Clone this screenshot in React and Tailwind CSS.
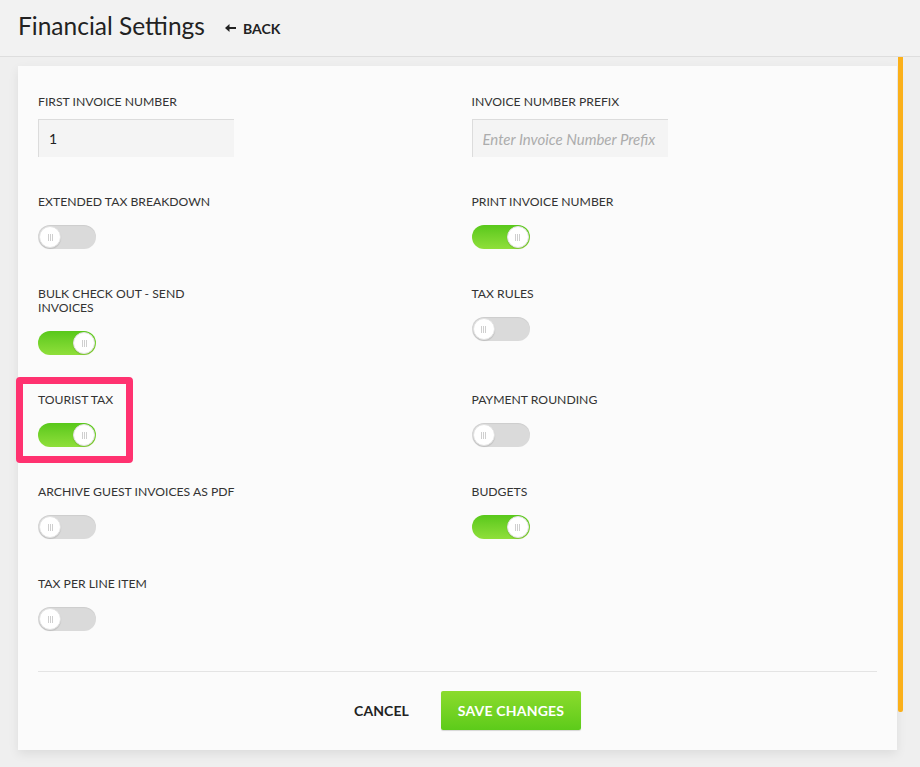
import React, { useState } from "react";

const Toggle = ({ on, onChange }) => (
  <button
    type="button"
    onClick={onChange}
    className={
      "relative block w-[58px] h-[24px] rounded-full " +
      (on
        ? "bg-gradient-to-b from-[#58c81a] to-[#8fdf3a]"
        : "bg-[#dadada] shadow-[inset_0_1px_1px_rgba(0,0,0,0.06)]")
    }
  >
    <span
      className={
        "absolute top-[1px] w-[22px] h-[22px] rounded-full bg-white border border-[#e2e2e2] shadow-[0_1px_1px_rgba(0,0,0,0.12)] flex items-center justify-center " +
        (on ? "left-[35px]" : "left-[1px]")
      }
    >
      <span className="flex gap-[1px]">
        <span className="w-[1px] h-[7px] bg-[#cfcfcf]" />
        <span className="w-[1px] h-[7px] bg-[#cfcfcf]" />
        <span className="w-[1px] h-[7px] bg-[#cfcfcf]" />
      </span>
    </span>
  </button>
);

const ToggleField = ({ label, on, onChange, highlight }) => (
  <div className="relative pb-[38px]">
    {highlight && (
      <div className="absolute left-[-22px] top-[-16px] w-[117px] h-[86px] border-[7px] border-[#ff3270] rounded-[4px] pointer-events-none" />
    )}
    <div className="text-[12.2px] leading-[14px] text-[#333] uppercase mb-[16px]">
      {label}
    </div>
    <Toggle on={on} onChange={onChange} />
  </div>
);

const App = () => {
  const [firstNumber, setFirstNumber] = useState("1");
  const [prefix, setPrefix] = useState("");
  const [settings, setSettings] = useState({
    extendedTax: false,
    printInvoice: true,
    bulkCheckout: true,
    taxRules: false,
    touristTax: true,
    paymentRounding: false,
    archivePdf: false,
    budgets: true,
    taxPerLine: false,
  });

  const flip = (key) => setSettings((s) => ({ ...s, [key]: !s[key] }));

  return (
    <div
      className="min-h-[767px] bg-[#efefef] text-[#333]"
      style={{ fontFamily: "Lato, 'Noto Sans', sans-serif" }}
    >
      {/* Header */}
      <div className="h-[57px] bg-[#f2f2f2] border-b border-[#dedede] flex items-center px-[18px] pb-[3px]">
        <h1 className="text-[24.5px] text-[#222] font-normal">
          Financial Settings
        </h1>
        <button className="ml-[20px] flex items-center gap-[7px] text-[14px] font-bold text-[#222] mt-[3px]">
          <svg width="11" height="8" viewBox="0 0 11 8">
            <path d="M0 4 L4.5 0 V3 H11 V5 H4.5 V8 Z" fill="#222" />
          </svg>
          BACK
        </button>
      </div>

      {/* Content */}
      <div className="relative pl-[18px] pr-[23px] pt-[9px]">
        <div className="absolute right-[17px] top-0 w-[5px] h-[655px] bg-[#fbb01a] rounded-b-[2px]" />
        <div className="bg-[#fbfbfb] shadow-[0_4px_10px_rgba(0,0,0,0.08)] px-[20px] pt-[29px] pb-[20px]">
          <div className="grid grid-cols-2 gap-x-[28px] mb-[2px]">
            <div className="pb-[38px]">
              <div className="text-[12.2px] leading-[14px] text-[#333] mb-[10px]">
                FIRST INVOICE NUMBER
              </div>
              <input
                value={firstNumber}
                onChange={(e) => setFirstNumber(e.target.value)}
                className="w-[196px] h-[38px] bg-[#f4f4f4] border-t border-l border-[#dcdcdc] px-[10px] text-[14px] text-[#222] outline-none"
              />
            </div>
            <div className="pb-[38px]">
              <div className="text-[12.2px] leading-[14px] text-[#333] mb-[10px]">
                INVOICE NUMBER PREFIX
              </div>
              <input
                value={prefix}
                onChange={(e) => setPrefix(e.target.value)}
                placeholder="Enter Invoice Number Prefix"
                className="w-[196px] h-[38px] bg-[#f4f4f4] border-t border-l border-[#dcdcdc] px-[10px] text-[15px] text-[#222] italic placeholder:text-[#acacac] outline-none"
              />
            </div>

            <ToggleField
              label="Extended Tax Breakdown"
              on={settings.extendedTax}
              onChange={() => flip("extendedTax")}
            />
            <ToggleField
              label="Print Invoice Number"
              on={settings.printInvoice}
              onChange={() => flip("printInvoice")}
            />

            <ToggleField
              label={
                <>
                  Bulk check out - send
                  <br />
                  invoices
                </>
              }
              on={settings.bulkCheckout}
              onChange={() => flip("bulkCheckout")}
            />
            <ToggleField
              label="Tax Rules"
              on={settings.taxRules}
              onChange={() => flip("taxRules")}
            />

            <ToggleField
              label="Tourist Tax"
              on={settings.touristTax}
              onChange={() => flip("touristTax")}
              highlight
            />
            <ToggleField
              label="Payment Rounding"
              on={settings.paymentRounding}
              onChange={() => flip("paymentRounding")}
            />

            <ToggleField
              label="Archive Guest Invoices as PDF"
              on={settings.archivePdf}
              onChange={() => flip("archivePdf")}
            />
            <ToggleField
              label="Budgets"
              on={settings.budgets}
              onChange={() => flip("budgets")}
            />

            <ToggleField
              label="Tax Per Line Item"
              on={settings.taxPerLine}
              onChange={() => flip("taxPerLine")}
            />
            <div />
          </div>

          <div className="border-t border-[#e4e4e4] pt-[19px] pl-[20px] flex justify-center items-center gap-[32px]">
            <button className="text-[14px] font-bold text-[#222] tracking-[0.1px]">
              CANCEL
            </button>
            <button className="w-[140px] h-[39px] rounded-[2px] bg-gradient-to-b from-[#8bdb2c] to-[#5ccb1a] text-white text-[14px] font-bold tracking-[0.2px] shadow-[0_1px_1px_rgba(0,0,0,0.15)]">
              SAVE CHANGES
            </button>
          </div>
        </div>
      </div>
    </div>
  );
};

export default App;
